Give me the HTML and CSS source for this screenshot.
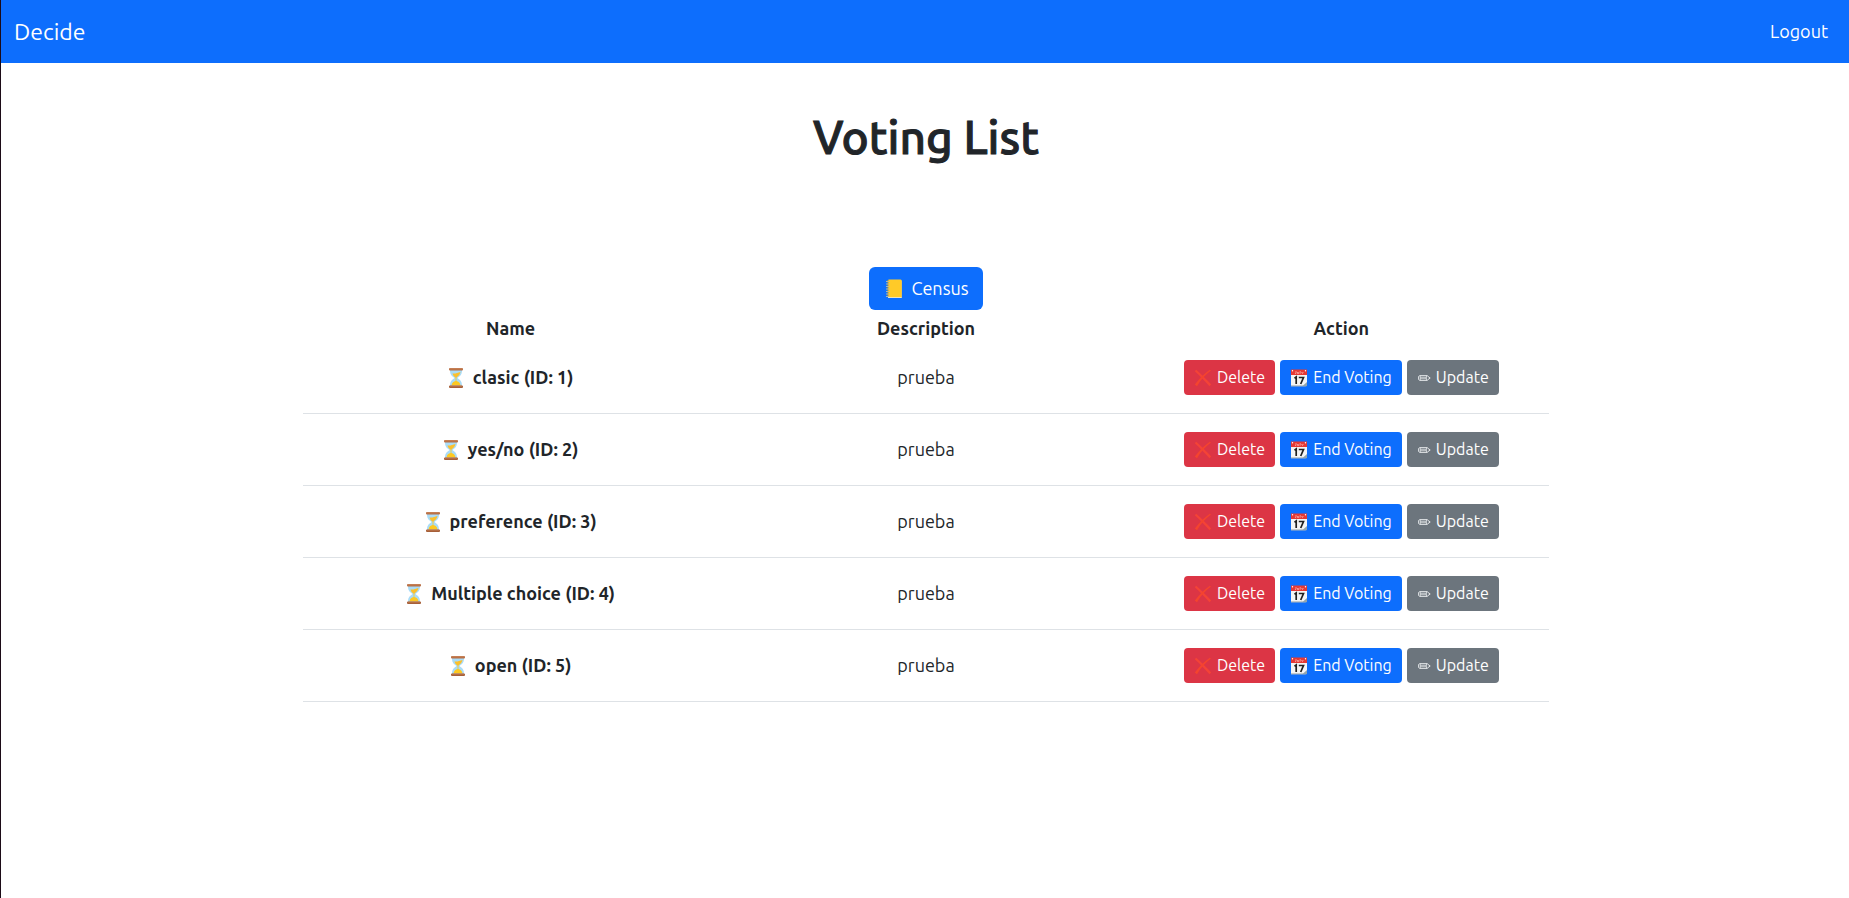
FILE: index.html
```html
<!DOCTYPE html>
<html lang="en">
<head>
<meta charset="utf-8">
<title>Voting List</title>
<link rel="stylesheet" href="styles.css">
</head>
<body>
<svg class="sprite" aria-hidden="true">
  <symbol id="hourglass" viewBox="0 0 16 20">
    <path d="M2 2h12c0 4-1 5.500-4.500 8C13 12.500 14 14 14 18H2c0-4 1-5.500 4.500-8C3 7.500 2 6 2 2z" fill="#a9dcf8"/>
    <path d="M4.500 5.500c3 .5 5-1 8-1.500-.6 2.500-2 4-4 5.500h-1C6 8.500 5 7.500 4.500 5.500z" fill="#fbc02d"/>
    <path d="M7.600 9h.8v4c2 .5 3.600 1.500 4.100 4.500h-9c.5-3 2.100-4 4.100-4.500z" fill="#fdc921"/>
    <rect x="1" y="0" width="14" height="2.600" rx="1" fill="#b86f45"/>
    <rect x="1" y="17.400" width="14" height="2.600" rx="1" fill="#a65f38"/>
    <path d="M2 .7h12M2 18h12" stroke="#cf8b60" stroke-width=".7"/>
  </symbol>
  <symbol id="ledger" viewBox="0 0 18 20">
    <path d="M3 1.500h14V19H3z" fill="#c5b98b"/>
    <rect x="3" y=".5" width="13.500" height="17.500" rx="1" fill="#ffca28"/>
    <path d="M3 1v17" stroke="#b9962d"/>
    <path d="M1 2.500h3.500M1 5h3.500M1 7.500h3.500M1 10h3.500M1 12.500h3.500M1 15h3.500M1 17.500h3.500" stroke="#b5b8a0" stroke-width="1.200"/>
    <path d="M3 18.500h13.500" stroke="#eee4bd"/>
  </symbol>
  <symbol id="cross" viewBox="0 0 18 18">
    <path d="M.8 2.200 2.200.8C8 6 12.500 10.500 17.200 15.500L15.500 17.200C10.500 11.500 6 7 .8 2.200z" fill="#f44336"/>
    <path d="M17 1.500C11 6 6.500 11 3 17.200L.8 15.500C5 10 10 5 15.800.8z" fill="#f4442e"/>
  </symbol>
  <symbol id="calendar" viewBox="0 0 18 18">
    <path d="M1 1h16v16H1z" fill="#f5f5f5"/>
    <path d="M1 16.200h11.500L17 17.500H1z" fill="#b0b8bc"/>
    <path d="M12.500 17 17 13v4z" fill="#90a4ae"/>
    <path d="M1 .5h16V6H1z" fill="#e53935"/>
    <circle cx="2.500" cy="1.800" r=".7" fill="#fff"/><circle cx="15.500" cy="1.800" r=".7" fill="#fff"/>
    <path d="M6 2v2.200l-1 .5M7.500 3v1.500h1.200V3M10.200 2v2.700M11.500 3l1 1.500L13.300 3" stroke="#ffd0cd" stroke-width=".6" fill="none"/>
    <path d="M4.500 9.200 6.200 8v7M8.800 8.500h4.700L10.700 15" stroke="#212121" stroke-width="1.700" fill="none"/>
  </symbol>
  <symbol id="pencil" viewBox="0 0 14 10">
    <path d="M1.500 3.500 3 2.500h7l3.200 2.500L10 7.500H3L1.500 6.500zM3.200 2.500v5M9.800 2.500 9.200 5l.6 2.500M3.200 4.200h6M3.200 5.800h6" fill="none" stroke="#e0e3e5" stroke-width=".9"/>
    <path d="m11.800 4 1.600 1-1.600 1z" fill="#e6e8ea"/>
  </symbol>
</svg>

<nav class="navbar">
  <a class="brand" href="#">Decide</a>
  <a class="nav-link" href="#">Logout</a>
</nav>

<main class="content">
  <h1 class="title">Voting List</h1>
  <button class="btn btn-primary" type="button"><svg class="icon-ledger"><use href="#ledger"/></svg>Census</button>
  <table class="table">
    <thead>
      <tr><th scope="col">Name</th><th scope="col">Description</th><th scope="col">Action</th></tr>
    </thead>
    <tbody>
      <tr>
        <th scope="row"><div class="name"><svg class="icon-hourglass"><use href="#hourglass"/></svg>clasic (ID: 1)</div></th>
        <td>prueba</td>
        <td><div class="actions">
          <button class="btn btn-sm btn-danger" type="button"><svg class="icon-sm"><use href="#cross"/></svg>Delete</button>
          <button class="btn btn-sm btn-primary" type="button"><svg class="icon-sm"><use href="#calendar"/></svg>End Voting</button>
          <button class="btn btn-sm btn-secondary" type="button"><svg class="icon-pencil"><use href="#pencil"/></svg>Update</button>
        </div></td>
      </tr>
      <tr>
        <th scope="row"><div class="name"><svg class="icon-hourglass"><use href="#hourglass"/></svg>yes/no (ID: 2)</div></th>
        <td>prueba</td>
        <td><div class="actions">
          <button class="btn btn-sm btn-danger" type="button"><svg class="icon-sm"><use href="#cross"/></svg>Delete</button>
          <button class="btn btn-sm btn-primary" type="button"><svg class="icon-sm"><use href="#calendar"/></svg>End Voting</button>
          <button class="btn btn-sm btn-secondary" type="button"><svg class="icon-pencil"><use href="#pencil"/></svg>Update</button>
        </div></td>
      </tr>
      <tr>
        <th scope="row"><div class="name"><svg class="icon-hourglass"><use href="#hourglass"/></svg>preference (ID: 3)</div></th>
        <td>prueba</td>
        <td><div class="actions">
          <button class="btn btn-sm btn-danger" type="button"><svg class="icon-sm"><use href="#cross"/></svg>Delete</button>
          <button class="btn btn-sm btn-primary" type="button"><svg class="icon-sm"><use href="#calendar"/></svg>End Voting</button>
          <button class="btn btn-sm btn-secondary" type="button"><svg class="icon-pencil"><use href="#pencil"/></svg>Update</button>
        </div></td>
      </tr>
      <tr>
        <th scope="row"><div class="name"><svg class="icon-hourglass"><use href="#hourglass"/></svg>Multiple choice (ID: 4)</div></th>
        <td>prueba</td>
        <td><div class="actions">
          <button class="btn btn-sm btn-danger" type="button"><svg class="icon-sm"><use href="#cross"/></svg>Delete</button>
          <button class="btn btn-sm btn-primary" type="button"><svg class="icon-sm"><use href="#calendar"/></svg>End Voting</button>
          <button class="btn btn-sm btn-secondary" type="button"><svg class="icon-pencil"><use href="#pencil"/></svg>Update</button>
        </div></td>
      </tr>
      <tr>
        <th scope="row"><div class="name"><svg class="icon-hourglass"><use href="#hourglass"/></svg>open (ID: 5)</div></th>
        <td>prueba</td>
        <td><div class="actions">
          <button class="btn btn-sm btn-danger" type="button"><svg class="icon-sm"><use href="#cross"/></svg>Delete</button>
          <button class="btn btn-sm btn-primary" type="button"><svg class="icon-sm"><use href="#calendar"/></svg>End Voting</button>
          <button class="btn btn-sm btn-secondary" type="button"><svg class="icon-pencil"><use href="#pencil"/></svg>Update</button>
        </div></td>
      </tr>
    </tbody>
  </table>
</main>
</body>
</html>
```

FILE: styles.css
```css
* { box-sizing: border-box; }

body {
  margin: 0;
  min-height: 100vh;
  border-left: 1px solid #1c0b17;
  background: #fff;
  color: #212529;
  font-family: Ubuntu, "Noto Sans", sans-serif;
  font-size: 18px;
  line-height: 27px;
}

.sprite { display: none; }

.navbar {
  display: flex;
  align-items: center;
  justify-content: space-between;
  padding: 14px 21px 14px 13px;
  background: #0d6efd;
}
.navbar a { color: #fff; text-decoration: none; }
.brand { font-size: 23px; line-height: 35px; }

.content {
  display: flex;
  flex-direction: column;
  align-items: center;
  padding: 47px 0 48px 2px;
}

.title {
  margin: 0 0 103px;
  font-size: 46px;
  font-weight: 500;
  line-height: 54px;
  -webkit-text-stroke: 1px currentColor;
}

.btn {
  display: inline-flex;
  align-items: center;
  justify-content: center;
  gap: 8px;
  padding: 8px 14px 8px 16px;
  border: 0;
  border-radius: 6px;
  color: #fff;
  font: inherit;
  cursor: pointer;
}
.btn-sm {
  gap: 5px;
  padding: 5px 10px;
  border-radius: 4px;
  font-size: 16px;
  line-height: 25px;
}
.btn-primary { background: #0d6efd; }
.btn-danger { background: #dc3545; }
.btn-secondary { background: #6c757d; }

.table {
  width: 67.5%;
  table-layout: fixed;
  border-collapse: collapse;
  text-align: center;
}
.table th, .table td { padding: 18px 8px; vertical-align: middle; }
.table thead th { padding: 5px 8px 0; }
.table tbody tr { border-bottom: 1px solid #dee2e6; }

.name {
  display: flex;
  align-items: center;
  justify-content: center;
  gap: 9px;
}
.actions {
  display: flex;
  justify-content: center;
  gap: 5px;
}

.icon-hourglass { width: 16px; height: 20px; }
.icon-ledger { width: 18px; height: 20px; }
.icon-sm { width: 18px; height: 18px; }
.icon-pencil { width: 14px; height: 10px; }
```
